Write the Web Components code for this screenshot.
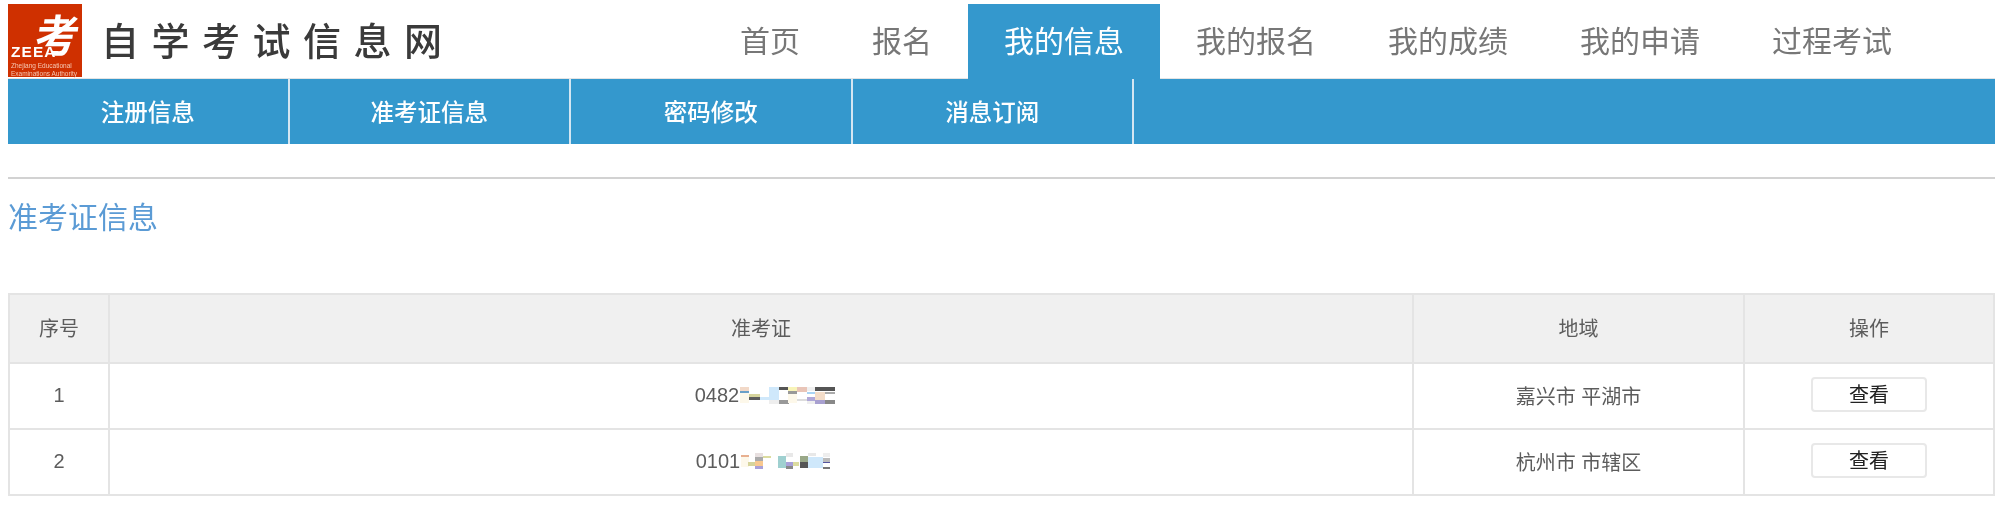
<!DOCTYPE html>
<html lang="zh">
<head>
<meta charset="utf-8">
<title>准考证信息</title>
<style>
    html, body { margin: 0; background: #fff; }
    body { font-family: "Noto Sans CJK SC", "Liberation Sans", sans-serif; }
</style>
</head>
<body>
<exam-page>
    <site-header slot="header">
        <main-link>首页</main-link>
        <main-link>报名</main-link>
        <main-link active>我的信息</main-link>
        <main-link>我的报名</main-link>
        <main-link>我的成绩</main-link>
        <main-link>我的申请</main-link>
        <main-link>过程考试</main-link>
    </site-header>
    <sub-nav slot="subnav">
        <sub-link>注册信息</sub-link>
        <sub-link>准考证信息</sub-link>
        <sub-link>密码修改</sub-link>
        <sub-link>消息订阅</sub-link>
    </sub-nav>
    <section-title>准考证信息</section-title>
    <ticket-table>
        <ticket-row head>
            <ticket-cell>序号</ticket-cell>
            <ticket-cell>准考证</ticket-cell>
            <ticket-cell>地域</ticket-cell>
            <ticket-cell>操作</ticket-cell>
        </ticket-row>
        <ticket-row>
            <ticket-cell>1</ticket-cell>
            <ticket-cell>0482<redact-mark variant="a"></redact-mark></ticket-cell>
            <ticket-cell>嘉兴市 平湖市</ticket-cell>
            <ticket-cell><view-button>查看</view-button></ticket-cell>
        </ticket-row>
        <ticket-row last>
            <ticket-cell>2</ticket-cell>
            <ticket-cell>0101<redact-mark variant="b"></redact-mark></ticket-cell>
            <ticket-cell>杭州市 市辖区</ticket-cell>
            <ticket-cell><view-button>查看</view-button></ticket-cell>
        </ticket-row>
    </ticket-table>
</exam-page>

<script>
// small helper, every element below is just a style block plus markup
class ShadowBlock extends HTMLElement {
    constructor() {
        super();
        this.attachShadow({ mode: 'open' });
        this.shadowRoot.innerHTML = this.constructor.markup;
    }
}

class ExamPage extends ShadowBlock {
    static markup = `
        <style>
            :host { display: block; padding: 4px 12px 0 8px; color: #666; filter: blur(.45px);
                font-family: "Noto Sans CJK SC", "Liberation Sans", sans-serif; }
            .rule { height: 2px; margin-top: 33px; background: #d2d2d2; }
        </style>
        <slot name="header"></slot>
        <slot name="subnav"></slot>
        <div class="rule"></div>
        <slot></slot>
    `;
}

class SiteHeader extends ShadowBlock {
    static markup = `
        <style>
            :host { display: flex; height: 75px; padding-right: 67px; }
            .logo { position: relative; flex: none; width: 74px; height: 73px; background: #cf3000; color: #fff; }
            .kao { position: absolute; left: 28px; top: -3px; font-size: 44px; line-height: 64px; font-weight: 700;
                transform: skewX(-8deg); }
            .zeea { position: absolute; left: 3px; top: 41px; font: 700 14px/14px "Liberation Sans", sans-serif; letter-spacing: 1px;
                transform: scaleX(1.1); transform-origin: left; }
            .en { position: absolute; left: 3px; top: 58px; font: 6.5px/7.5px "Liberation Sans", sans-serif; color: #f6c9b4; white-space: nowrap; }
            .name { flex: none; margin: 13px 0 0 19px; font-size: 38px; line-height: 44px; letter-spacing: 12.5px; color: #3a3a3a;
                white-space: nowrap; font-weight: 500; }
            nav { display: flex; margin-left: auto; }
        </style>
        <div class="logo">
            <span class="kao">考</span>
            <span class="zeea">ZEEA</span>
            <span class="en">Zhejiang Educational<br>Examinations Authority</span>
        </div>
        <div class="name">自学考试信息网</div>
        <nav><slot></slot></nav>
    `;
}

class MainLink extends ShadowBlock {
    static markup = `
        <style>
            :host { display: block; padding: 0 36px; font-size: 30px; line-height: 71px; color: #777; white-space: nowrap; }
            :host([active]) { background: #3498cd; color: #fff; }
        </style>
        <slot></slot>
    `;
}

class SubNav extends ShadowBlock {
    static markup = `
        <style>
            :host { display: flex; height: 65px; background: #3498cd; box-shadow: 0 -1px 0 #e4e4e4; }
        </style>
        <slot></slot>
    `;
}

class SubLink extends ShadowBlock {
    static markup = `
        <style>
            :host { display: block; box-sizing: border-box; width: 281.5px; border-right: 2px solid #d4e6f2;
                text-align: center; font-size: 23.5px; font-weight: 500; line-height: 65px; color: #fff; }
        </style>
        <slot></slot>
    `;
}

class SectionTitle extends ShadowBlock {
    static markup = `
        <style>
            :host { display: block; margin: 17px 0 58px; font-size: 30px; line-height: 39px; color: #5b9bd5; }
        </style>
        <slot></slot>
    `;
}

class TicketTable extends ShadowBlock {
    static markup = `
        <style>
            :host { display: block; border: 2px solid #e4e4e4; font-size: 20px; color: #5c5c5c; }
        </style>
        <slot></slot>
    `;
}

class TicketRow extends ShadowBlock {
    static markup = `
        <style>
            :host { display: grid; grid-template-columns: 100px 1304px 331px 1fr; height: 66px; box-sizing: border-box;
                border-bottom: 2px solid #e4e4e4; }
            :host([head]) { height: 69px; background: #f0f0f0; }
            :host([last]) { height: 64px; border-bottom: 0; }
        </style>
        <slot></slot>
    `;
}

class TicketCell extends ShadowBlock {
    static markup = `
        <style>
            :host { display: flex; align-items: center; justify-content: center; box-sizing: border-box; padding-bottom: 2px;
                border-right: 2px solid #e4e4e4; font-family: "Liberation Sans", "Noto Sans CJK SC", sans-serif; }
            :host(:last-child) { border-right: 0; }
        </style>
        <slot></slot>
    `;
}

class ViewButton extends ShadowBlock {
    static markup = `
        <style>
            :host { display: block; box-sizing: border-box; width: 116px; height: 35px; margin-bottom: 1px; border: 2px solid #e8e8e8; border-radius: 4px;
                background: #fff; text-align: center; line-height: 30px; font-size: 20px; color: #222;
                font-family: "Noto Sans CJK SC", sans-serif; }
        </style>
        <slot></slot>
    `;
}

// the blurred-out part of the ticket numbers: x, y, w, h, colour
const REDACTIONS = {
    a: [
        [1, 0, 9, 16, '#fdf8ea'], [1, 0, 9, 4, '#f2d9c8'], [1, 4, 9, 2, '#6aa0c8'],
        [10, 7, 11, 3, '#d6d49c'], [10, 10, 11, 3, '#5c5c5c'],
        [21, 10, 9, 3, '#cfe8fb'], [30, 0, 10, 13, '#cfe8fb'], [30, 13, 10, 4, '#eeeeee'],
        [40, 0, 10, 3, '#555555'], [40, 13, 10, 4, '#999999'],
        [49, 0, 9, 16, '#fdf8ea'], [49, 0, 9, 4, '#f8f4b8'], [49, 4, 9, 3, '#999999'],
        [58, 0, 10, 5, '#e9c5b8'], [58, 12, 10, 2, '#dddddd'],
        [68, 0, 8, 4, '#f0f0f0'], [68, 5, 8, 2, '#a9d4f5'], [68, 10, 8, 4, '#b0a8d8'], [68, 14, 8, 3, '#eeeeee'],
        [76, 0, 20, 4, '#555555'], [76, 5, 10, 8, '#f3dcc8'], [86, 5, 10, 2, '#aaaaaa'],
        [76, 13, 10, 4, '#a8a0d0'], [86, 13, 10, 4, '#888888']
    ],
    b: [
        [1, 2, 8, 2, '#e8b090'], [1, 4, 8, 10, '#fdf8ea'], [8, 9, 7, 4, '#d6d49c'],
        [15, 0, 8, 4, '#e8e0e0'], [15, 4, 8, 4, '#aaaaaa'], [15, 8, 8, 5, '#f8c890'], [15, 13, 8, 3, '#a8a0d8'],
        [23, 3, 8, 2, '#dcdca0'],
        [38, 3, 8, 12, '#9fd0d0'], [46, 0, 7, 4, '#e8e8e8'], [46, 9, 7, 4, '#a8a0d8'], [46, 13, 7, 3, '#888888'],
        [53, 9, 6, 4, '#dcdca0'], [60, 3, 8, 6, '#99a888'], [60, 9, 8, 6, '#555555'],
        [68, 0, 8, 3, '#e8e8e8'], [68, 4, 15, 11, '#cfe8fb'], [83, 0, 7, 4, '#eeeeee'],
        [83, 5, 7, 4, '#bbbbbb'], [83, 9, 7, 1, '#5555a0'], [83, 14, 7, 2, '#777777']
    ]
};

class RedactMark extends ShadowBlock {
    static markup = `
        <style>
            :host { display: inline-block; flex: none; width: var(--w, 88px); height: 17px; }
            svg { display: block; overflow: visible; }
        </style>
        <svg width="96" height="17"></svg>
    `;

    connectedCallback() {
        const variant = this.getAttribute('variant');
        this.style.setProperty('--w', variant === 'a' ? '88px' : '86px');
        this.shadowRoot.querySelector('svg').innerHTML = REDACTIONS[variant]
            .map(([x, y, w, h, fill]) => `<rect x="${x}" y="${y}" width="${w}" height="${h}" fill="${fill}"/>`)
            .join('');
    }
}

customElements.define('exam-page', ExamPage);
customElements.define('site-header', SiteHeader);
customElements.define('main-link', MainLink);
customElements.define('sub-nav', SubNav);
customElements.define('sub-link', SubLink);
customElements.define('section-title', SectionTitle);
customElements.define('ticket-table', TicketTable);
customElements.define('ticket-row', TicketRow);
customElements.define('ticket-cell', TicketCell);
customElements.define('view-button', ViewButton);
customElements.define('redact-mark', RedactMark);
</script>
</body>
</html>
